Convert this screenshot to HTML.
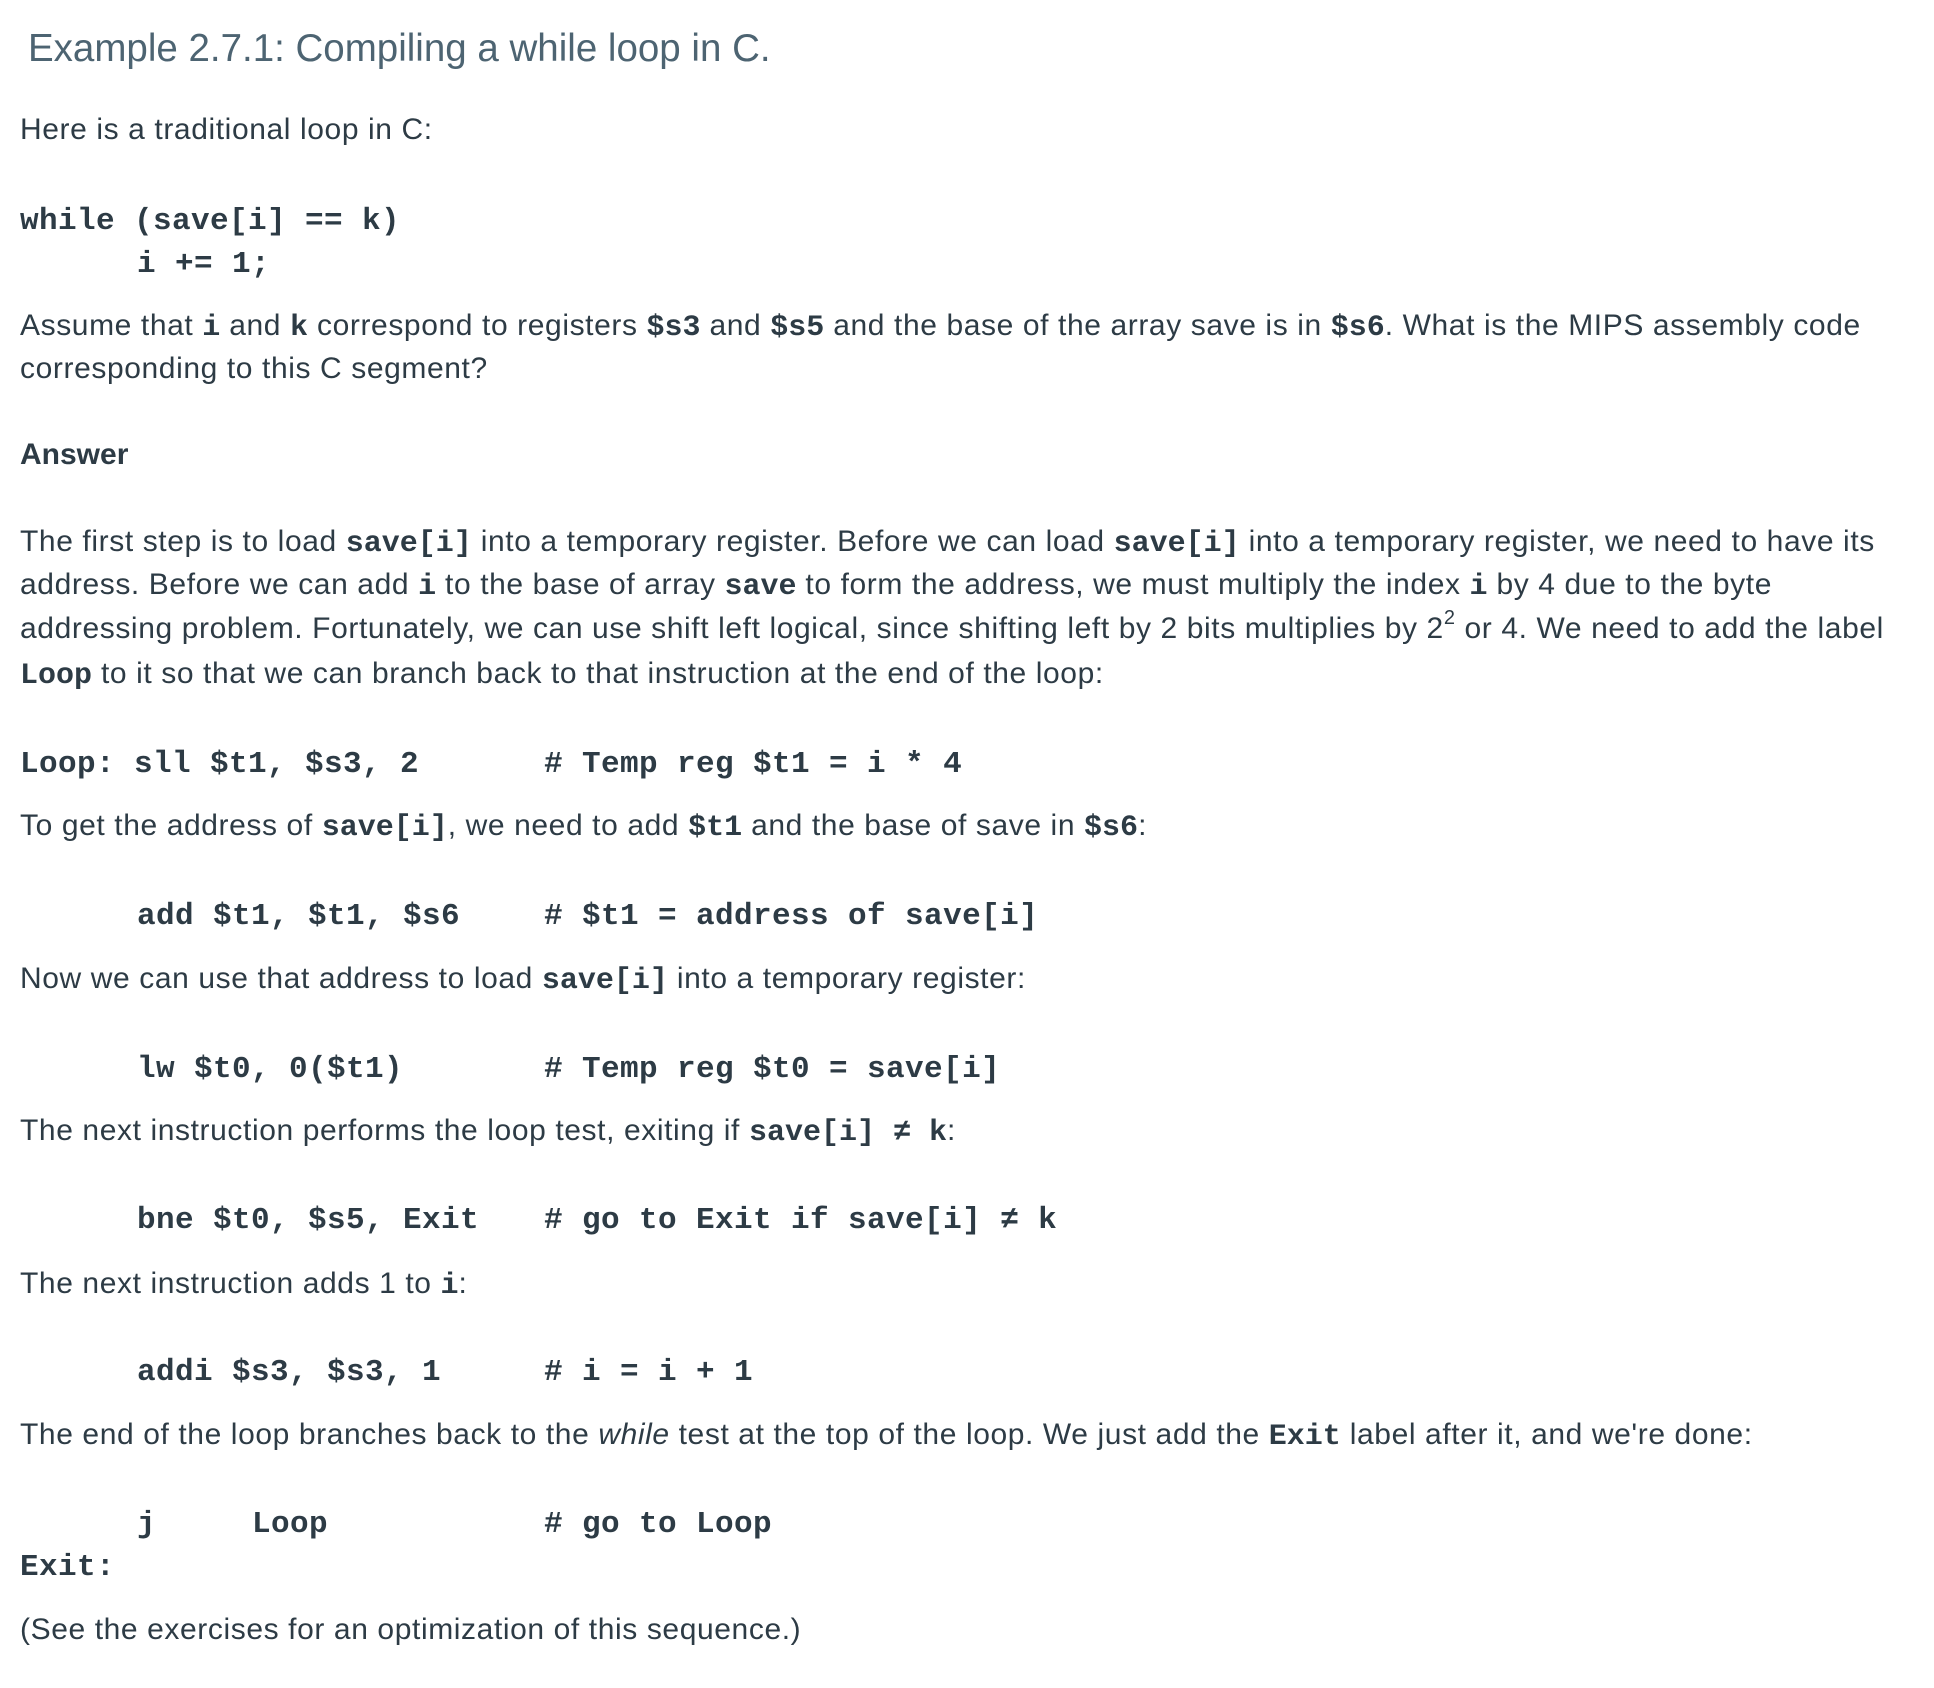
<!DOCTYPE html>
<html><head><meta charset="utf-8"><style>
html,body{margin:0;padding:0;background:#fff;width:1934px;height:1688px;overflow:hidden}
body{position:relative;font-family:"Liberation Sans",sans-serif;color:#2d3b45}
.l{position:absolute;left:20px;white-space:nowrap;font-size:30px;line-height:44px;letter-spacing:0.6px}
.c,code{font-family:"Liberation Mono",monospace;font-weight:bold;font-size:31px;letter-spacing:0.4px;color:#2d3b45}
code{font-size:30px;letter-spacing:0}
.c{position:absolute;white-space:pre;line-height:44px}
h1{position:absolute;left:28px;top:24px;margin:0;font-weight:normal;font-size:38.5px;line-height:50px;color:#4d6472;letter-spacing:0;white-space:nowrap}
sup{font-size:20px;line-height:0;vertical-align:14px}
</style></head><body>
<h1>Example 2.7.1: Compiling a while loop in C.</h1>
<div class="l" style="top:108px">Here is a traditional loop in C:</div>
<div class="c" style="left:20px;top:200px">while (save[i] == k)</div>
<div class="c" style="left:137px;top:243px">i += 1;</div>
<div class="l" style="top:304px">Assume that <code>i</code> and <code>k</code> correspond to registers <code>$s3</code> and <code>$s5</code> and the base of the array save is in <code>$s6</code>. What is the MIPS assembly code</div>
<div class="l" style="top:347px">corresponding to this C segment?</div>
<div class="l" style="top:433px;font-weight:bold;letter-spacing:0">Answer</div>
<div class="l" style="top:520px">The first step is to load <code>save[i]</code> into a temporary register. Before we can load <code>save[i]</code> into a temporary register, we need to have its</div>
<div class="l" style="top:563px">address. Before we can add <code>i</code> to the base of array <code>save</code> to form the address, we must multiply the index <code>i</code> by 4 due to the byte</div>
<div class="l" style="top:607px">addressing problem. Fortunately, we can use shift left logical, since shifting left by 2 bits multiplies by 2<sup>2</sup> or 4. We need to add the label</div>
<div class="l" style="top:652px"><code>Loop</code> to it so that we can branch back to that instruction at the end of the loop:</div>
<div class="c" style="left:20px;top:743px">Loop: sll $t1, $s3, 2</div>
<div class="c" style="left:544px;top:743px"># Temp reg $t1 = i * 4</div>
<div class="l" style="top:804px">To get the address of <code>save[i]</code>, we need to add <code>$t1</code> and the base of save in <code>$s6</code>:</div>
<div class="c" style="left:137px;top:895px">add $t1, $t1, $s6</div>
<div class="c" style="left:544px;top:895px"># $t1 = address of save[i]</div>
<div class="l" style="top:957px">Now we can use that address to load <code>save[i]</code> into a temporary register:</div>
<div class="c" style="left:137px;top:1048px">lw $t0, 0($t1)</div>
<div class="c" style="left:544px;top:1048px"># Temp reg $t0 = save[i]</div>
<div class="l" style="top:1109px">The next instruction performs the loop test, exiting if <code>save[i] ≠ k</code>:</div>
<div class="c" style="left:137px;top:1199px">bne $t0, $s5, Exit</div>
<div class="c" style="left:544px;top:1199px"># go to Exit if save[i] ≠ k</div>
<div class="l" style="top:1262px">The next instruction adds 1 to <code>i</code>:</div>
<div class="c" style="left:137px;top:1351px">addi $s3, $s3, 1</div>
<div class="c" style="left:544px;top:1351px"># i = i + 1</div>
<div class="l" style="top:1413px">The end of the loop branches back to the <i>while</i> test at the top of the loop. We just add the <code>Exit</code> label after it, and we're done:</div>
<div class="c" style="left:137px;top:1503px">j</div>
<div class="c" style="left:252px;top:1503px">Loop</div>
<div class="c" style="left:544px;top:1503px"># go to Loop</div>
<div class="c" style="left:20px;top:1546px">Exit:</div>
<div class="l" style="top:1608px">(See the exercises for an optimization of this sequence.)</div>
</body></html>
